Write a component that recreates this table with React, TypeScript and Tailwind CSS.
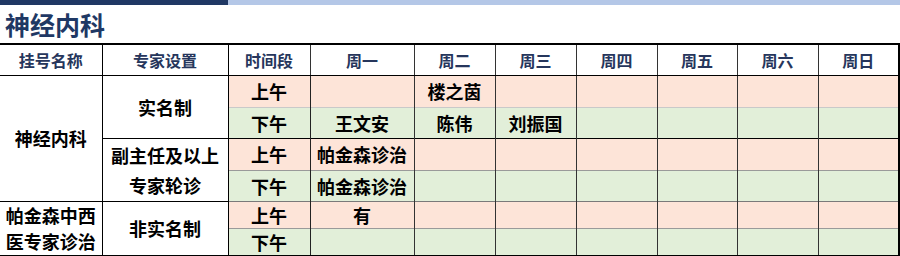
import React from 'react';

// Weekly outpatient schedule for the neurology department
const days = ['周一', '周二', '周三', '周四', '周五', '周六', '周日'];

type Slot = { label: string; cells: string[]; am: boolean; h: string; line?: string };

const slots: Slot[] = [
  { label: '上午', cells: ['', '楼之茵', '', '', '', '', ''], am: true, h: 'h-[32px]' },
  { label: '下午', cells: ['王文安', '陈伟', '刘振国', '', '', '', ''], am: false, h: 'h-[31px]', line: 'border-t-[#c9c9c9]' },
  { label: '上午', cells: ['帕金森诊治', '', '', '', '', '', ''], am: true, h: 'h-[32px]', line: 'border-t-black' },
  { label: '下午', cells: ['帕金森诊治', '', '', '', '', '', ''], am: false, h: 'h-[31px]', line: 'border-t-[#9a9a9a]' },
  { label: '上午', cells: ['有', '', '', '', '', '', ''], am: true, h: 'h-[26px]', line: 'border-t-[#7a7a7a]' },
  { label: '下午', cells: ['', '', '', '', '', '', ''], am: false, h: 'h-[27px]', line: 'border-t-[#9a9a9a]' },
];

const cjk = { fontFamily: '"Noto Sans CJK SC", "Noto Sans", sans-serif' };

export default function App() {
  return (
    <div className="w-[900px] h-[256px] bg-white overflow-hidden" style={cjk}>
      {/* Header strip */}
      <div className="flex h-[5px]">
        <div className="w-[228px] bg-[#203864]" />
        <div className="flex-1 bg-[#b4c7e7]" />
      </div>
      <div className="h-[38px] flex items-center pl-[5px] text-[25px] font-bold text-[#1f3864] leading-none">
        神经内科
      </div>

      <table className="table-fixed border-collapse w-[899px] border-t-2 border-t-black border-b-2 border-b-black border-r-2 border-r-black text-center font-bold">
        <colgroup>
          <col className="w-[102px]" />
          <col className="w-[126px]" />
          <col className="w-[82px]" />
          <col className="w-[104px]" />
          <col className="w-[81px]" />
          <col className="w-[81px]" />
          <col className="w-[81px]" />
          <col className="w-[80px]" />
          <col className="w-[81px]" />
          <col className="w-[81px]" />
        </colgroup>
        <thead>
          <tr className="h-[31px] text-[16px] text-[#26365c]">
            <th className="border-r border-r-black border-b border-b-black font-bold">挂号名称</th>
            <th className="border-r border-r-black border-b border-b-black font-bold">专家设置</th>
            <th className="border-r border-r-[#333] border-b border-b-black font-bold">时间段</th>
            {days.map((d) => (
              <th key={d} className="border-r border-r-[#333] border-b border-b-black font-bold">
                {d}
              </th>
            ))}
          </tr>
        </thead>
        <tbody className="text-[18px] text-black leading-[26px]">
          {slots.map((s, i) => (
            <tr key={i} className={s.h}>
              {i === 0 && (
                <td rowSpan={4} className="border-r border-r-black border-b border-b-black align-middle">
                  神经内科
                </td>
              )}
              {i === 4 && (
                <td rowSpan={2} className="border-r border-r-black leading-[26px] align-middle">
                  帕金森中西
                  <br />
                  医专家诊治
                </td>
              )}
              {i === 0 && (
                <td rowSpan={2} className="border-r border-r-black border-b border-b-black align-middle">
                  实名制
                </td>
              )}
              {i === 2 && (
                <td rowSpan={2} className="border-r border-r-black border-b border-b-black align-middle leading-[30px]">
                  副主任及以上
                  <br />
                  专家轮诊
                </td>
              )}
              {i === 4 && (
                <td rowSpan={2} className="border-r border-r-black align-middle">
                  非实名制
                </td>
              )}
              <td
                className={`border-r border-r-[#222] border-t ${s.line ?? 'border-t-black'} ${
                  s.am ? 'bg-[#fde4d8]' : 'bg-[#e2efd9]'
                }`}
              >
                {s.label}
              </td>
              {s.cells.map((c, j) => (
                <td
                  key={j}
                  className={`border-r border-r-[#333] border-t ${s.line ?? 'border-t-black'} ${
                    s.am ? 'bg-[#fde4d8]' : 'bg-[#e2efd9]'
                  }`}
                >
                  {c}
                </td>
              ))}
            </tr>
          ))}
        </tbody>
      </table>
    </div>
  );
}
